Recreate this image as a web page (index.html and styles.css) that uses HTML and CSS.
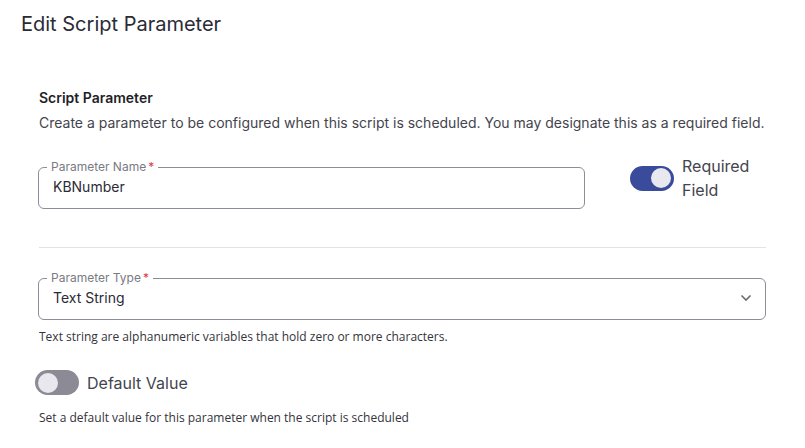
FILE: index.html
```html
<!DOCTYPE html>
<html lang="en">
<head>
<meta charset="utf-8">
<title>Edit Script Parameter</title>
<link rel="stylesheet" href="styles.css">
</head>
<body>
<div class="dialog">
  <h1 class="title">Edit Script Parameter</h1>
  <div class="content">
    <h2 class="section-title">Script Parameter</h2>
    <p class="section-desc">Create a parameter to be configured when this script is scheduled. You may designate this as a required field.</p>

    <div class="row">
      <fieldset class="field field-name">
        <legend class="field-label">Parameter Name<span class="req">*</span></legend>
        <div class="field-value">KBNumber</div>
      </fieldset>
      <div class="toggle-group">
        <span class="switch switch-on"><span class="knob"></span></span>
        <span class="toggle-label">Required<br>Field</span>
      </div>
    </div>

    <hr class="divider">

    <fieldset class="field field-type">
      <legend class="field-label">Parameter Type<span class="req">*</span></legend>
      <div class="field-value select-value">
        <span>Text String</span>
        <svg class="chevron" width="12" height="8" viewBox="0 0 12 8"><path d="M1.5 1.5 L6 6 L10.5 1.5" fill="none" stroke="#6b6b72" stroke-width="1.6"/></svg>
      </div>
    </fieldset>
    <p class="helper">Text string are alphanumeric variables that hold zero or more characters.</p>

    <div class="toggle-group default-toggle">
      <span class="switch switch-off"><span class="knob"></span></span>
      <span class="toggle-label">Default Value</span>
    </div>
    <p class="helper helper-last">Set a default value for this parameter when the script is scheduled</p>
  </div>
</div>
</body>
</html>
```
FILE: styles.css
```css
* { box-sizing: border-box; }
html, body { margin: 0; padding: 0; background: #ffffff; }
body { font-family: Inter, "Noto Sans", sans-serif; color: #2b2b36; }

.dialog { width: 805px; height: 448px; overflow: hidden; }

.title {
  margin: 0;
  padding: 12px 21px 0;
  font-size: 20px;
  line-height: 24px;
  font-weight: 400;
  color: #2b2b36;
}

.content { padding: 53px 40px 0 39px; }

.section-title {
  margin: 0;
  font-size: 14px;
  line-height: 17px;
  font-weight: 600;
  color: #1f1f28;
}
.section-desc {
  margin: 8px 0 0;
  font-size: 14px;
  line-height: 17px;
  color: #44444e;
}

.row {
  display: flex;
  align-items: flex-start;
  margin-top: 23px;
}

.field {
  margin: 0;
  padding: 0 14px;
  min-width: 0;
  border: 1px solid #8d8c97;
  border-radius: 6px;
}
.field-name { width: 547px; margin: 6px 0 0 -1px; height: 49px; }
.field-label {
  padding: 0 4px;
  margin-left: -6px;
  font-size: 12px;
  line-height: 14px;
  color: #7a7a84;
}
.req { color: #e0383e; margin-left: 2px; }
.field-value {
  font-size: 14px;
  line-height: 18px;
  color: #2b2b36;
  padding: 4px 0 0 0;
}

.toggle-group {
  display: flex;
  align-items: center;
  gap: 8px;
}
.row .toggle-group { margin-left: 45px; }

.switch {
  position: relative;
  display: inline-block;
  width: 44px;
  height: 25px;
  border-radius: 13px;
  flex: none;
}
.switch-on { background: #3a4b9b; }
.switch-off { background: #8b8a95; }
.knob {
  position: absolute;
  top: 2.5px;
  width: 20px;
  height: 20px;
  border-radius: 50%;
  background: #e8e8ee;
}
.switch-on .knob { left: 21px; }
.switch-off .knob { left: 3px; }

.toggle-label {
  font-size: 16px;
  line-height: 24px;
  color: #44444e;
}

.divider {
  margin: 38px 0 0;
  border: 0;
  border-top: 1px solid #e3e3e7;
  width: 727px;
}

.field-type { margin: 23px 0 0 -1px; width: 728px; height: 49px; }
.select-value { display: flex; justify-content: space-between; align-items: center; }
.chevron { margin-right: -1px; }

.helper {
  margin: 9px 0 0;
  font-family: "Open Sans", sans-serif;
  font-size: 12px;
  line-height: 16px;
  color: #33333b;
}
.default-toggle { margin-top: 25px; margin-left: -4px; }
.helper-last { margin-top: 15px; }
```
